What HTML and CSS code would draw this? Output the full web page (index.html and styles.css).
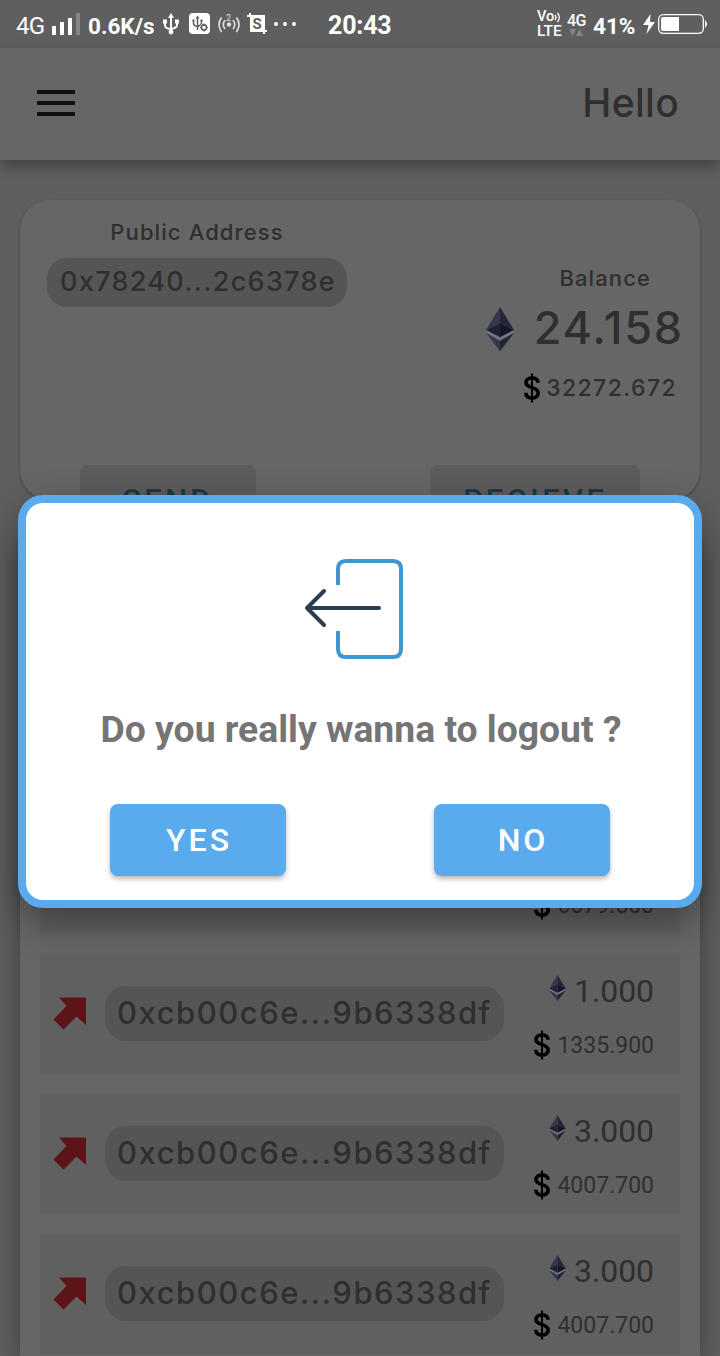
FILE: index.html
```html
<!DOCTYPE html>
<html lang="en">
<head>
<meta charset="utf-8">
<title>Wallet</title>
<link rel="stylesheet" href="styles.css">
</head>
<body>
<svg class="defs" width="0" height="0">
  <symbol id="eth" viewBox="0 0 28 44">
    <path fill="#343849" d="M14 0 0 23l14-7z"/>
    <path fill="#252738" d="M14 0v16l14 7z"/>
    <path fill="#202235" d="M0 23l14-7v14z"/>
    <path fill="#151628" d="M28 23l-14-7v14z"/>
    <path fill="#343849" d="M0 26l14 8v10z"/>
    <path fill="#202235" d="M28 26l-14 8v10z"/>
    <path fill="none" stroke="#777982" stroke-width="1.7" d="M.5 24.5 14 32l13.5-7.5"/>
  </symbol>
  <symbol id="dollar" viewBox="0 0 16 30">
    <path fill="none" stroke="#000" stroke-width="3.6" d="M14 9.7C14 6.5 11.5 5 8 5S2 6.5 2 9.5c0 6.5 12.2 3.8 12.2 10.6 0 3.3-2.7 4.9-6.2 4.900s-6.200-1.700-6.200-5.200"/>
    <path stroke="#000" stroke-width="2" d="M8 .5v29"/>
  </symbol>
  <symbol id="sent" viewBox="0 0 33 33">
    <path fill="#5c1418" d="M6 .5h27V28l-9.500-8.500L10.500 32.500.5 22.500 13.500 9z"/>
  </symbol>
</svg>
<div class="screen">
  <div class="status">
    <span class="net">4G</span>
    <svg class="bars" width="29" height="23" viewBox="0 0 29 23"><path fill="#fff" d="M0 13h4v9H0zM8 9h4v13H8zM16 5h4v17h-4z"/><path fill="#858585" d="M24 0h4v22h-4z"/></svg>
    <span class="speed">0.6K/s</span>
    <svg class="usb" width="16" height="22" viewBox="0 0 16 22" fill="none" stroke="#fff" stroke-width="2"><path d="M8 3v16M2 8v4.500q0 3 6 3.500M14 8v4q0 3-6 4"/><path fill="#fff" stroke="none" d="M8 0l3 5H5zM0 6.500h4v4H0zM12 6.500h4v4h-4z"/><circle cx="8" cy="19" r="2.400" fill="#fff" stroke="none"/></svg>
    <svg class="usbset" width="21" height="21" viewBox="0 0 21 21" fill="none" stroke="#5f5f5f" stroke-width="1.500"><rect width="21" height="21" rx="4" fill="#fff" stroke="none"/><path d="M8.500 4v13M4.500 7v3q0 3 4 3.500M12.500 7v3q0 2-4 3.500"/><path fill="#5f5f5f" stroke="none" d="M8.500 2.500l2 3h-4zM3.500 6.500h2v2h-2zM11.500 6.500h2v2h-2z"/><circle cx="15" cy="14.500" r="3.900" fill="#fff" stroke="none"/><circle cx="15" cy="14.500" r="2.600" stroke-width="1.600"/><path d="M15 10.500v2M15 16.500v2M11 14.500h2M17 14.500h2" stroke-width="1.200"/></svg>
    <svg class="hotspot" width="22" height="20" viewBox="0 0 22 20" fill="none" stroke="#ddd" stroke-width="1.700"><circle cx="11" cy="11.500" r="2.200" fill="#ddd" stroke="none"/><path d="M7 7q-3.500 4.500 0 9M3.500 4.500Q-1.500 11.500 3.500 19M15 7q3.500 4.500 0 9M18.500 4.500q5 7 0 14.500"/><text x="8" y="7.500" class="tiny">2</text></svg>
    <svg class="shot" width="21" height="21" viewBox="0 0 21 21"><path fill="#fff" d="M0 2h18v17H3V4H0zM2 0h2v3H2zM3 17h17v2H3zM16 17h2v4h-2z"/><text x="5.500" y="16" class="s">S</text></svg>
    <svg class="dots" width="24" height="4" viewBox="0 0 24 4" fill="#fff"><circle cx="3" cy="2" r="2"/><circle cx="12" cy="2" r="2"/><circle cx="21" cy="2" r="2"/></svg>
    <span class="time">20:43</span>
    <span class="volte"><span>Vo<svg width="7" height="11" viewBox="0 0 7 11" fill="none" stroke="#fff" stroke-width="1.300"><path d="M1 3q2 2.500 0 5M3.500 1q3.500 4.500 0 9"/></svg></span><span class="lte">LTE</span></span>
    <span class="data"><span>4G</span><svg width="14" height="7" viewBox="0 0 14 7" fill="#858585"><path d="M0 0h7L3.500 7zM7 7h7l-3.500-7z"/></svg></span>
    <span class="percent">41%</span>
    <svg class="bolt" width="12" height="20" viewBox="0 0 12 20"><path fill="#fff" d="M7.500 0 0 11h5.500L3.500 20 12 8H7z"/></svg>
    <svg class="battery" width="50" height="20" viewBox="0 0 50 20"><rect x=".7" y=".7" width="44.600" height="18.600" rx="4.500" fill="none" stroke="#fff" stroke-width="1.300"/><path fill="#fff" d="M5 3h16v14H5q-2 0-2-2V5q0-2 2-2zM47 6q4 4 0 8z"/></svg>
  </div>
  <header class="appbar">
    <svg width="38" height="26" viewBox="0 0 38 26"><path fill="#101010" d="M0 0h38v4H0zM0 11h38v4H0zM0 22h38v4H0z"/></svg>
    <span class="hello">Hello</span>
  </header>
  <section class="account">
    <div class="info">
      <div class="address"><span class="label">Public Address</span><span class="pill">0x78240...2c6378e</span></div>
      <div class="balance">
        <span class="label bal">Balance</span>
        <div class="amount"><svg width="30" height="44"><use href="#eth"/></svg><span class="total">24.158</span></div>
        <div class="fiat"><svg width="16" height="30"><use href="#dollar"/></svg><span class="usd">32272.672</span></div>
      </div>
    </div>
    <div class="actions"><div class="flat send">SEND</div><div class="flat receive">RECIEVE</div></div>
  </section>
  <section class="history">
    <div class="tx"><div class="value"><div class="coin"></div><div class="cash"><svg width="16" height="30"><use href="#dollar"/></svg><span>6679.500</span></div></div></div>
    <div class="tx"><svg width="33" height="33"><use href="#sent"/></svg><span class="hash"><span>0xcb00c6e...9b6338df</span></span><div class="value"><div class="coin"><svg width="17" height="26"><use href="#eth"/></svg><span>1.000</span></div><div class="cash"><svg width="16" height="30"><use href="#dollar"/></svg><span>1335.900</span></div></div></div>
    <div class="tx"><svg width="33" height="33"><use href="#sent"/></svg><span class="hash"><span>0xcb00c6e...9b6338df</span></span><div class="value"><div class="coin"><svg width="17" height="26"><use href="#eth"/></svg><span>3.000</span></div><div class="cash"><svg width="16" height="30"><use href="#dollar"/></svg><span>4007.700</span></div></div></div>
    <div class="tx"><svg width="33" height="33"><use href="#sent"/></svg><span class="hash"><span>0xcb00c6e...9b6338df</span></span><div class="value"><div class="coin"><svg width="17" height="26"><use href="#eth"/></svg><span>3.000</span></div><div class="cash"><svg width="16" height="30"><use href="#dollar"/></svg><span>4007.700</span></div></div></div>
  </section>
  <div class="dialog">
    <svg class="logout" width="100" height="102" viewBox="0 0 100 102" fill="none" stroke-width="4"><path stroke="#4096d1" d="M34 28V12q0-8 8-8h47q8 0 8 8v80q0 8-8 8H42q-8 0-8-8V74"/><path stroke="#2c3e50" stroke-linecap="round" stroke-linejoin="round" d="M75 51H3M20 34 3 51l17 17"/></svg>
    <p class="question">Do you really wanna to logout ?</p>
    <div class="choices"><button class="btn">YES</button><button class="btn">NO</button></div>
  </div>
</div>
</body>
</html>
```
FILE: styles.css
```css
* { box-sizing: border-box; }
body { margin: 0; font-family: Roboto, "Liberation Sans", sans-serif; }
svg { display: block; flex: none; }
.defs { position: absolute; }
.screen { position: relative; width: 720px; height: 1356px; overflow: hidden; background: #5f5f5f; color: #2f2f2f; display: flex; flex-direction: column; }
.status { height: 48px; flex: none; display: flex; align-items: center; color: #fff; white-space: nowrap; padding-left: 16px; background: #5f5f5f; }
.net { font-size: 24px; width: 36px; padding-top: 4px; letter-spacing: -0.8px; }
.bars { margin-top: 1px; }
.speed { font-size: 22.500px; font-weight: 700; width: 82px; padding: 3px 0 0 7px; }
.usb { margin-bottom: 1px; }
.usbset { margin-left: 10px; margin-bottom: 1px; }
.hotspot { margin-left: 8px; margin-bottom: 2px; }
.shot { margin-left: 7px; margin-bottom: 2px; }
.dots { margin-left: 5px; }
.tiny { font-size: 9px; fill: #ddd; stroke: none; }
.s { font-size: 15px; font-weight: 700; fill: #5f5f5f; }
.time { font-size: 25px; font-weight: 700; margin-left: 31px; padding-top: 3px; width: 209px; letter-spacing: -0.2px; }
.volte { width: 29px; display: flex; flex-direction: column; font-size: 14.500px; line-height: 14px; font-weight: 500; }
.volte > span { display: flex; align-items: center; }
.volte .lte { font-size: 15.500px; }
.data { width: 27px; font-size: 16px; font-weight: 500; line-height: 15px; padding-left: 1px; letter-spacing: -0.7px; }
.data svg { margin: 1px 0 0 2px; }
.percent { font-size: 22.500px; font-weight: 700; width: 50px; padding-top: 3px; }
.battery { margin-left: 3px; }
.appbar { position: relative; height: 112px; flex: none; display: flex; align-items: center; justify-content: space-between; padding: 0 41px 2px 37px; background: #666; box-shadow: 0 6px 14px rgba(0,0,0,.32); }
.hello { font: 500 39px Inter, sans-serif; letter-spacing: .3px; margin-top: -2px; }
.account { height: 300px; margin: 40px 20px 0; flex: none; border-radius: 30px; background: #666; box-shadow: 0 1px 3px rgba(0,0,0,.32); font-family: Inter, sans-serif; }
.info { height: 265px; display: flex; justify-content: space-between; padding: 0 18px 0 27px; }
.address { width: 300px; padding-top: 18px; display: flex; flex-direction: column; align-items: center; }
.label { font-size: 22px; line-height: 28px; font-weight: 500; letter-spacing: 1.100px; }
.pill { margin-top: 12px; width: 300px; height: 49px; border-radius: 20px; background: #555; font-size: 27px; font-weight: 500; line-height: 48px; text-align: center; white-space: nowrap; letter-spacing: 1.300px; padding-left: 2px; }
.balance { padding-top: 64px; display: flex; flex-direction: column; align-items: flex-end; }
.bal { margin-right: 31px; }
.amount { display: flex; align-items: center; height: 74px; gap: 19px; margin-right: -2px; }
.total { font-size: 45px; font-weight: 500; letter-spacing: 1.800px; margin-top: -3px; }
.fiat { display: flex; align-items: center; height: 43px; gap: 6px; margin-right: 5px; }
.usd { font-size: 23px; font-weight: 500; letter-spacing: 1.400px; }
.actions { display: flex; justify-content: space-between; padding: 0 60px; }
.flat { height: 35px; overflow: hidden; border-radius: 8px 8px 0 0; background: #5c5c5c; color: #18394a; font: 500 31px/71px Roboto, sans-serif; letter-spacing: 3.300px; text-align: center; }
.send { width: 176px; }
.receive { width: 210px; }
.history { margin: 40px 20px 0; height: 816px; padding: 274px 20px 0; background: #666; flex: none; display: flex; flex-direction: column; gap: 20px; box-shadow: 0 8px 24px rgba(0,0,0,.36); }
.tx { height: 120px; flex: none; display: flex; align-items: center; background: #606060; padding: 0 0 2px 13px; }
.hash { width: 399px; height: 55px; margin-left: 19px; border-radius: 21px; background: #555; display: flex; align-items: center; justify-content: center; white-space: nowrap; font: 500 31px Inter, sans-serif; letter-spacing: 1.500px; padding: 0 0 1px; }
.value { flex: 1; height: 120px; padding: 13px 26px 0 0; }
.coin { display: flex; justify-content: flex-end; height: 51px; font-size: 32px; line-height: 51px; gap: 8px; letter-spacing: -0.1px; }
.coin svg { margin-top: 9px; }
.cash { display: flex; justify-content: flex-end; align-items: center; height: 56px; font-size: 23px; gap: 7px; }
.dialog { position: absolute; left: 18px; top: 495px; width: 684px; height: 413px; border: 8px solid #5aabee; border-radius: 25px; background: #fff; display: flex; flex-direction: column; align-items: center; padding-top: 54px; box-shadow: 0 14px 36px rgba(0,0,0,.34); }
.logout { margin-left: -12px; }
.question { margin: 46px 0 0; font-size: 37.300px; line-height: 48px; font-weight: 700; color: #757575; white-space: nowrap; padding-left: 2px; }
.choices { margin-top: 51px; width: 500px; display: flex; justify-content: space-between; }
.btn { width: 176px; height: 72px; border: 0; border-radius: 8px; background: #5aabee; color: #fff; font: 500 32px/70px Roboto, sans-serif; letter-spacing: 3px; padding: 0 0 0 2px; box-shadow: 0 3px 5px rgba(0,0,0,.28); }
```
